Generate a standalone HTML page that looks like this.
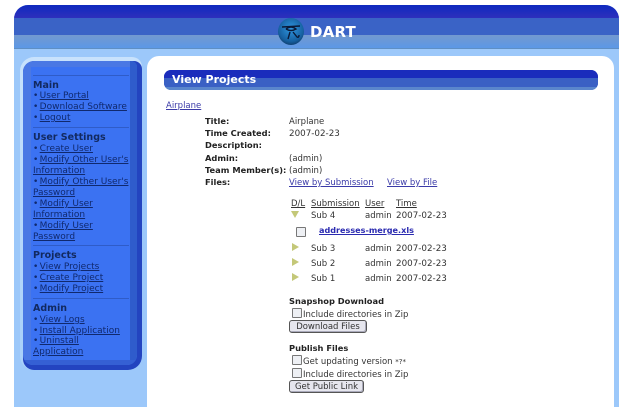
<!DOCTYPE html>
<html><head><meta charset="utf-8">
<style>
html,body{margin:0;padding:0;background:#fff;width:640px;height:407px;overflow:hidden;font-family:"DejaVu Sans","Liberation Sans",sans-serif;font-size:8.5px;color:#333}
div,a,b,span{position:absolute;white-space:nowrap}
a{color:#3a3aa8;text-decoration:underline}
.t{line-height:11px;margin-top:1px}
b{color:#222;font-size:8.3px}
b.t{margin-top:0}
.d{font-size:8.75px}
.s a,.s div{color:#10296e}
.s div{left:33px;line-height:11px;font-size:9px;margin-top:1px}
.s a{position:static;color:#10296e;margin-left:-1.5px}
.s .h{font-weight:bold;color:#12295f;font-size:9.5px}
.s .r{left:33px;width:96px;height:1px;background:#2f5cc8}
.cb{width:8px;height:8px;border:1px solid #777;background:#eef0f4;border-radius:1px}
.btn{border:1px solid #555;border-radius:3px;background:#e6e6ee;box-shadow:inset -1px -1px 0 #aab;color:#333;text-align:center;line-height:12px;height:11px}
.tri{width:0;height:0;border-top:4px solid transparent;border-bottom:4px solid transparent;border-left:7px solid #c4c878}
</style></head><body>
<!-- header -->
<div style="left:14px;top:5px;width:605px;height:402px;background:#9cc8fa;border-radius:14px 14px 0 0;overflow:hidden">
 <div style="left:0;top:0;width:605px;height:13px;background:linear-gradient(#0f2abf,#2e2fbc)"></div>
 <div style="left:0;top:13px;width:605px;height:17px;background:#3a63c6"></div>
 <div style="left:0;top:30px;width:605px;height:13px;background:linear-gradient(#7399cf,#5c98e6)"></div>
 <div style="left:0;top:43px;width:605px;height:1px;background:#5f8fc4"></div>
</div>
<!-- logo -->
<div style="left:278px;top:18px;width:26px;height:27px;border-radius:50%;background:radial-gradient(circle at 50% 40%,#2f96e0,#1660a0 60%,#0a1c3c)"></div>
<svg style="position:absolute;left:278px;top:18px" width="26" height="27" viewBox="0 0 26 27"><path d="M4 9 L22 8 M8 11 Q13 7 18 11 Q13 14 8 11 M12 14 L10 21 M15 14 L19 19 Q21 20 21 17" fill="none" stroke="#0a1a38" stroke-width="1.4"/></svg>
<div style="left:310px;top:23px;font:bold 15px/18px 'DejaVu Sans',sans-serif;color:#fff;letter-spacing:.2px">DART</div>
<!-- sidebar -->
<div style="left:20px;top:57px;width:122px;height:313px;background:linear-gradient(#c8e2fc,#a8d0fa);border-radius:14px 10px 14px 14px"></div>
<div style="left:23px;top:61px;width:119px;height:309px;background:#2344c0;border-radius:11px 8px 14px 11px"></div>
<div style="left:23px;top:61px;width:114px;height:304px;background:#4a78e4;border-radius:11px 6px 10px 10px;overflow:hidden">
 <div style="left:107px;top:0;width:7px;height:304px;background:#2f5ccc"></div>
 <div style="left:0;top:299px;width:114px;height:5px;background:#3560d4"></div>
</div>
<div style="left:31px;top:67px;width:99px;height:293px;background:#3b72f2"></div>
<div class="s" style="left:0;top:0;width:0;height:0">
 <span class="r" style="top:75px"></span>
 <div class="h" style="top:79px">Main</div>
 <div style="top:90px">• <a>User Portal</a></div>
 <div style="top:101px">• <a>Download Software</a></div>
 <div style="top:112px">• <a>Logout</a></div>
 <span class="r" style="top:127px"></span>
 <div class="h" style="top:131px">User Settings</div>
 <div style="top:143px">• <a>Create User</a></div>
 <div style="top:154px">• <a>Modify Other User's</a></div>
 <div style="top:165px"><a style="margin:0">Information</a></div>
 <div style="top:176px">• <a>Modify Other User's</a></div>
 <div style="top:187px"><a style="margin:0">Password</a></div>
 <div style="top:198px">• <a>Modify User</a></div>
 <div style="top:209px"><a style="margin:0">Information</a></div>
 <div style="top:220px">• <a>Modify User</a></div>
 <div style="top:231px"><a style="margin:0">Password</a></div>
 <span class="r" style="top:245px"></span>
 <div class="h" style="top:249px">Projects</div>
 <div style="top:261px">• <a>View Projects</a></div>
 <div style="top:272px">• <a>Create Project</a></div>
 <div style="top:283px">• <a>Modify Project</a></div>
 <span class="r" style="top:298px"></span>
 <div class="h" style="top:302px">Admin</div>
 <div style="top:314px">• <a>View Logs</a></div>
 <div style="top:325px">• <a>Install Application</a></div>
 <div style="top:335px">• <a>Uninstall</a></div>
 <div style="top:346px"><a style="margin:0">Application</a></div>
</div>
<!-- content -->
<div style="left:147px;top:56px;width:467px;height:351px;background:#fff;border-radius:12px 12px 0 0"></div>
<div style="left:164px;top:70px;width:434px;height:20px;border-radius:7px;overflow:hidden;background:#3a63c6">
 <div style="left:0;top:0;width:434px;height:8px;background:#1a2cbc"></div>
 <div style="left:0;top:8px;width:434px;height:9px;background:#3a60c4"></div>
 <div style="left:0;top:17px;width:434px;height:3px;background:#5a86cc"></div>
</div>
<div style="left:172px;top:72px;font:bold 11px/15px 'DejaVu Sans',sans-serif;color:#fff">View Projects</div>

<a class="t" style="left:166px;top:100px">Airplane</a>
<b class="t" style="left:205px;top:116px">Title:</b><span class="t" style="left:289px;top:116px">Airplane</span>
<b class="t" style="left:205px;top:128px">Time Created:</b><span class="t d" style="left:289px;top:128px">2007-02-23</span>
<b class="t" style="left:205px;top:140px">Description:</b>
<b class="t" style="left:205px;top:153px">Admin:</b><span class="t" style="left:289px;top:153px">(admin)</span>
<b class="t" style="left:205px;top:165px">Team Member(s):</b><span class="t" style="left:289px;top:165px">(admin)</span>
<b class="t" style="left:205px;top:177px">Files:</b>
<a class="t" style="left:289px;top:177px">View by Submission</a>
<a class="t" style="left:387px;top:177px">View by File</a>

<span class="t" style="left:291px;top:198px;text-decoration:underline">D/L</span>
<span class="t" style="left:311px;top:198px;text-decoration:underline">Submission</span>
<span class="t" style="left:365px;top:198px;text-decoration:underline">User</span>
<span class="t" style="left:396px;top:198px;text-decoration:underline">Time</span>

<div style="left:291px;top:211px;width:0;height:0;border-left:4px solid transparent;border-right:4px solid transparent;border-top:7px solid #c4c878"></div>
<span class="t" style="left:311px;top:210px">Sub 4</span><span class="t" style="left:365px;top:210px">admin</span><span class="t d" style="left:396px;top:210px">2007-02-23</span>
<div class="cb" style="left:296px;top:227px"></div>
<a class="t" style="left:319px;top:224px;font-weight:bold;font-size:8.1px;color:#2a2ab0">addresses-merge.xls</a>
<div class="tri" style="left:292px;top:243px"></div>
<span class="t" style="left:311px;top:243px">Sub 3</span><span class="t" style="left:365px;top:243px">admin</span><span class="t d" style="left:396px;top:243px">2007-02-23</span>
<div class="tri" style="left:292px;top:258px"></div>
<span class="t" style="left:311px;top:258px">Sub 2</span><span class="t" style="left:365px;top:258px">admin</span><span class="t d" style="left:396px;top:258px">2007-02-23</span>
<div class="tri" style="left:292px;top:273px"></div>
<span class="t" style="left:311px;top:273px">Sub 1</span><span class="t" style="left:365px;top:273px">admin</span><span class="t d" style="left:396px;top:273px">2007-02-23</span>

<b class="t" style="left:289px;top:296px">Snapshop Download</b>
<div class="cb" style="left:292px;top:308px"></div>
<span class="t" style="left:303px;top:309px">Include directories in Zip</span>
<div class="btn" style="left:289px;top:320px;width:76px">Download Files</div>

<b class="t" style="left:289px;top:343px">Publish Files</b>
<div class="cb" style="left:292px;top:355px"></div>
<span class="t" style="left:303px;top:356px">Get updating version <span style="position:static;font-size:7px">*?*</span></span>
<div class="cb" style="left:292px;top:368px"></div>
<span class="t" style="left:303px;top:369px">Include directories in Zip</span>
<div class="btn" style="left:289px;top:380px;width:73px">Get Public Link</div>
</body></html>
